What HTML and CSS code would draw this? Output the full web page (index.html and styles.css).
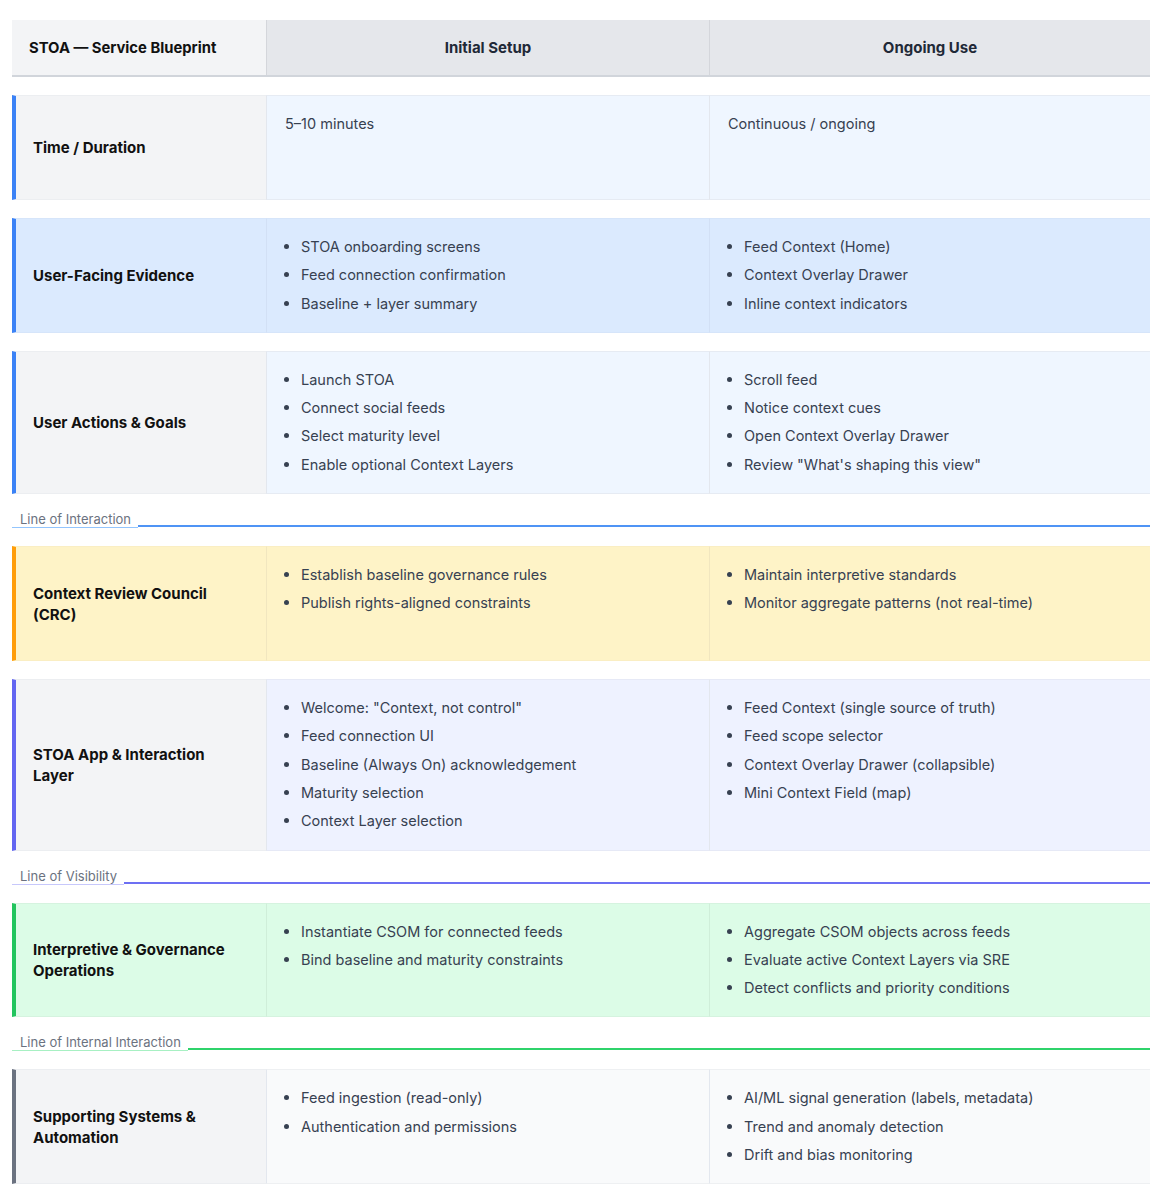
FILE: index.html
```html
<!DOCTYPE html>
<html lang="en">
<head>
<meta charset="utf-8">
<title>STOA — Service Blueprint</title>
<link rel="stylesheet" href="styles.css">
</head>
<body>
<div class="blueprint">
  <div class="row head">
    <div class="hcell title">STOA — Service Blueprint</div>
    <div class="hcell phase">Initial Setup</div>
    <div class="hcell phase">Ongoing Use</div>
  </div>

  <div class="row lane-blue row-time">
    <div class="label">Time / Duration</div>
    <div class="cell"><div class="plain">5–10 minutes</div></div>
    <div class="cell"><div class="plain">Continuous / ongoing</div></div>
  </div>

  <div class="row lane-blue evidence">
    <div class="label">User-Facing Evidence</div>
    <div class="cell"><ul><li>STOA onboarding screens</li><li>Feed connection confirmation</li><li>Baseline + layer summary</li></ul></div>
    <div class="cell"><ul><li>Feed Context (Home)</li><li>Context Overlay Drawer</li><li>Inline context indicators</li></ul></div>
  </div>

  <div class="row lane-blue">
    <div class="label">User Actions &amp; Goals</div>
    <div class="cell"><ul><li>Launch STOA</li><li>Connect social feeds</li><li>Select maturity level</li><li>Enable optional Context Layers</li></ul></div>
    <div class="cell"><ul><li>Scroll feed</li><li>Notice context cues</li><li>Open Context Overlay Drawer</li><li>Review "What's shaping this view"</li></ul></div>
  </div>

  <div class="divider div-blue"><span class="dlabel">Line of Interaction</span><span class="dline"></span></div>

  <div class="row lane-amber row-min">
    <div class="label">Context Review Council (CRC)</div>
    <div class="cell"><ul><li>Establish baseline governance rules</li><li>Publish rights-aligned constraints</li></ul></div>
    <div class="cell"><ul><li>Maintain interpretive standards</li><li>Monitor aggregate patterns (not real-time)</li></ul></div>
  </div>

  <div class="row lane-indigo">
    <div class="label">STOA App &amp; Interaction Layer</div>
    <div class="cell"><ul><li>Welcome: "Context, not control"</li><li>Feed connection UI</li><li>Baseline (Always On) acknowledgement</li><li>Maturity selection</li><li>Context Layer selection</li></ul></div>
    <div class="cell"><ul><li>Feed Context (single source of truth)</li><li>Feed scope selector</li><li>Context Overlay Drawer (collapsible)</li><li>Mini Context Field (map)</li></ul></div>
  </div>

  <div class="divider div-indigo"><span class="dlabel">Line of Visibility</span><span class="dline"></span></div>

  <div class="row lane-green">
    <div class="label">Interpretive &amp; Governance Operations</div>
    <div class="cell"><ul><li>Instantiate CSOM for connected feeds</li><li>Bind baseline and maturity constraints</li></ul></div>
    <div class="cell"><ul><li>Aggregate CSOM objects across feeds</li><li>Evaluate active Context Layers via SRE</li><li>Detect conflicts and priority conditions</li></ul></div>
  </div>

  <div class="divider div-green"><span class="dlabel">Line of Internal Interaction</span><span class="dline"></span></div>

  <div class="row lane-gray">
    <div class="label">Supporting Systems &amp; Automation</div>
    <div class="cell"><ul><li>Feed ingestion (read-only)</li><li>Authentication and permissions</li></ul></div>
    <div class="cell"><ul><li>AI/ML signal generation (labels, metadata)</li><li>Trend and anomaly detection</li><li>Drift and bias monitoring</li></ul></div>
  </div>
</div>
</body>
</html>
```

FILE: styles.css
```css
* { box-sizing: border-box; }

html, body {
  margin: 0;
  padding: 0;
  background: #ffffff;
}

body {
  font-family: Inter, "Noto Sans", "Liberation Sans", sans-serif;
  font-size: 14.5px;
  color: #374151;
  padding: 20px 0 0 12px;
}

.blueprint {
  width: 1138px;
  display: flex;
  flex-direction: column;
  gap: 18px;
}

.row {
  display: grid;
  grid-template-columns: 254px 443px 441px;
}

/* header */
.head {
  border-bottom: 2px solid #d1d5db;
}
.hcell {
  height: 55px;
  display: flex;
  align-items: center;
  font-weight: 700;
  font-size: 15px;
  color: #111827;
}
.hcell.title {
  background: #f3f4f6;
  padding-left: 17px;
  color: #111111;
  font-size: 14.8px;
}
.hcell.phase {
  background: #e5e7eb;
  justify-content: center;
  border-left: 1px solid #d4d6db;
  color: #1f2937;
}

/* lanes */
.label {
  display: flex;
  align-items: center;
  padding: 0 30px 0 17px;
  border-left: 4px solid #3b82f6;
  background: #f3f4f6;
  font-weight: 700;
  font-size: 15px;
  color: #111111;
  line-height: 21px;
  border-top: 1px solid #eceef1;
  border-bottom: 1px solid #eceef1;
}

.cell {
  padding: 14px 18px 14px 18px;
  border-left: 1px solid #e3e7ee;
  border-top: 1px solid #e6ebf3;
  border-bottom: 1px solid #e6ebf3;
}

.plain {
  line-height: 28px;
}

ul {
  margin: 0;
  padding: 0 0 0 16px;
}
li {
  line-height: 28.3px;
}
li::marker {
  font-size: 15px;
}

.lane-blue .label { border-left-color: #3b82f6; }
.lane-blue .cell { background: #eff6ff; }

.evidence .label { background: #dbeafe; border-top-color: #d6e5fa; border-bottom-color: #d6e5fa; }
.evidence .cell { background: #dbeafe; border-top-color: #d6e5fa; border-bottom-color: #d6e5fa; border-left-color: #d2e0f5; }

.row-time { min-height: 105px; }
.row-min { min-height: 115px; }

.lane-amber .label { border-left-color: #ff9d0a; background: #fef3c7; border-top-color: #faeec3; border-bottom-color: #faeec3; }
.lane-amber .cell { background: #fef3c7; border-top-color: #faeec3; border-bottom-color: #faeec3; border-left-color: #f1e6bf; }

.lane-indigo .label { border-left-color: #6366f1; }
.lane-indigo .cell { background: #eef2ff; border-top-color: #e6e9f6; border-bottom-color: #e6e9f6; }

.lane-green .label { border-left-color: #22c55e; background: #dcfce7; border-top-color: #d5f3df; border-bottom-color: #d5f3df; }
.lane-green .cell { background: #dcfce7; border-top-color: #d5f3df; border-bottom-color: #d5f3df; border-left-color: #cfeed9; }

.lane-gray .label { border-left-color: #6b7280; }
.lane-gray .cell { background: #f9fafb; border-top-color: #eef0f2; border-bottom-color: #eef0f2; }

/* dividers */
.divider {
  display: flex;
  align-items: flex-end;
  height: 16px;
}
.dlabel {
  font-size: 13px;
  line-height: 15px;
  color: #6b7280;
  padding: 0 7px 0 8px;
  border-bottom: 1px solid #93c5fd;
  white-space: nowrap;
}
.dline {
  flex: 1;
  height: 2px;
  margin-bottom: 1px;
  background: #4f94f5;
}
.div-indigo .dlabel { border-bottom-color: #c7c8fb; }
.div-indigo .dline { background: #6d70f3; }
.div-green .dlabel { border-bottom-color: #a7f0c3; }
.div-green .dline { background: #2fd36b; }
```
